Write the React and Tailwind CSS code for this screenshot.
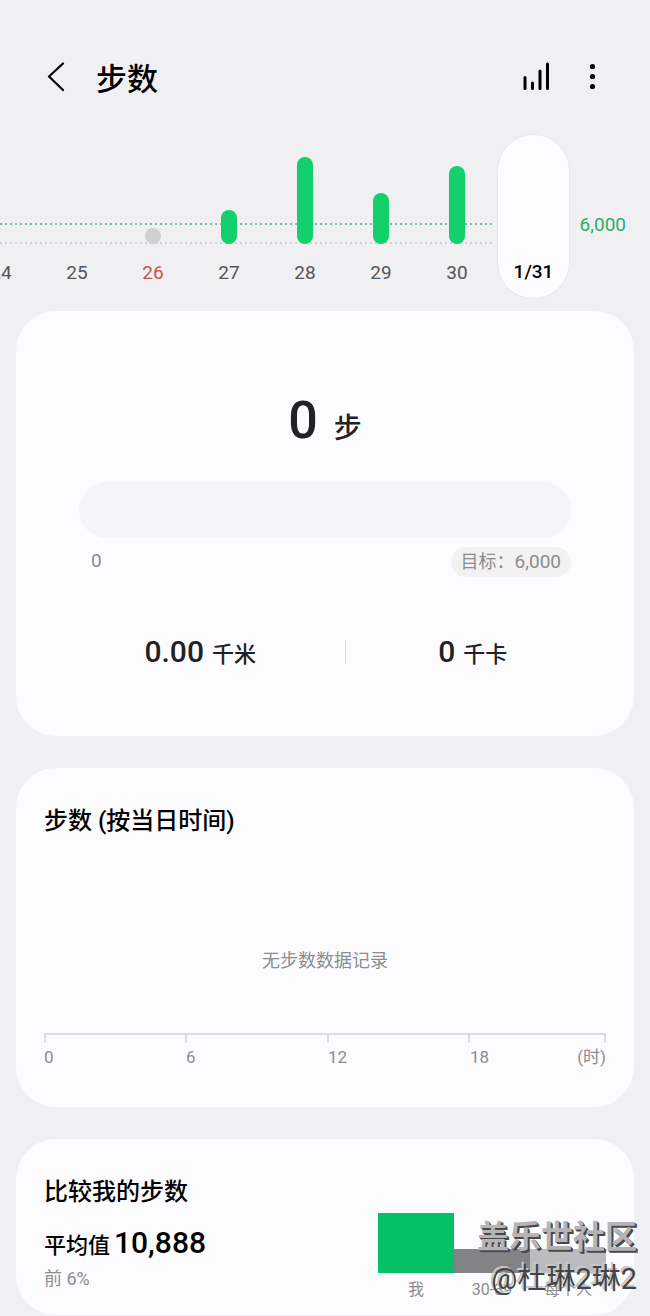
const days = [
    { label: '24', height: 0 },
    { label: '25', height: 0 },
    { label: '26', height: 0, rest: true },
    { label: '27', height: 34 },
    { label: '28', height: 87 },
    { label: '29', height: 51 },
    { label: '30', height: 78 },
    { label: '1/31', height: 0, selected: true },
];

const hours = ['0', '6', '12', '18'];

function Header() {
    return (
        <header className="flex items-center justify-between pt-14 pl-11 pr-[49px]">
            <div className="flex items-center gap-7">
                <button aria-label="返回">
                    <svg className="w-6 h-8" viewBox="0 0 24 32" fill="none" stroke="black" strokeWidth="2.2" strokeLinecap="round" strokeLinejoin="round">
                        <path d="M19 1.5L5 14.500l14 13.5" />
                    </svg>
                </button>
                <h1 className="pt-1 text-[31px] leading-10 font-medium">步数</h1>
            </div>
            <div className="flex items-center gap-8">
                <button aria-label="图表">
                    <svg className="w-8 h-8" viewBox="0 0 32 32" stroke="black" strokeWidth="3" strokeLinecap="round">
                        <path d="M4 15.500v11M11.500 21v5.500M19 9v17.500M26.500 2v24.500" />
                    </svg>
                </button>
                <button aria-label="更多">
                    <svg className="w-4 h-8" viewBox="0 0 16 32" fill="black">
                        <circle cx="7.500" cy="4.500" r="2.600" />
                        <circle cx="7.500" cy="14.500" r="2.600" />
                        <circle cx="7.500" cy="24.500" r="2.600" />
                    </svg>
                </button>
            </div>
        </header>
    );
}

function DayPicker() {
    return (
        <section className="relative mt-[34px] flex justify-end overflow-hidden pr-[80px]">
            {/* Goal line and base line */}
            <svg className="absolute left-0 top-0 w-[calc(100%-155px)] h-full" fill="none" strokeWidth="2">
                <line x1="0" y1="90" x2="100%" y2="90" stroke="#6fbf9a" strokeDasharray="2 3" />
                <line x1="0" y1="109" x2="100%" y2="109" stroke="#d0d0d2" strokeDasharray="2 3" />
            </svg>
            {days.map((day) => (
                <button
                    key={day.label}
                    className={`relative shrink-0 h-[165px] pb-[14px] flex flex-col items-center justify-end gap-[17px] ${day.selected ? 'w-[73px] ml-[2px] rounded-full border border-[#e8e8ea] bg-[#fcfcfe]' : 'w-[76px]'}`}
                >
                    {day.rest && <span className="w-4 h-4 rounded-full bg-[#d0d0d0]" />}
                    {day.height > 0 && <span className="w-4 rounded-full bg-[#13cf6d]" style={{ height: day.height }} />}
                    <span className={`text-[19px] leading-6 ${day.selected ? 'font-medium text-black' : day.rest ? 'text-[#c9504a]' : 'text-[#555557]'}`}>
                        {day.label}
                    </span>
                </button>
            ))}
            <span className="absolute right-6 top-[79px] text-[19px] leading-6 text-[#2bae6c]">6,000</span>
        </section>
    );
}

function Summary() {
    return (
        <section className="mt-3 rounded-[40px] bg-[#fcfcfe] px-[63px] pt-[82px] pb-16 text-[#222224]">
            <p className="flex items-baseline justify-center gap-4 font-medium">
                <span className="text-[52px] leading-14">0</span>
                <span className="text-[28px]">步</span>
            </p>
            <div className="mt-8 h-14 rounded-full bg-[#f5f5f7]" />
            <div className="mt-[9px] flex items-start justify-between pl-3 text-[#8c8c8e]">
                <span className="text-[19px] leading-7">0</span>
                <button className="flex items-center rounded-full bg-[#f2f2f3] px-[10px]">
                    <span className="text-lg leading-[30px]">目标：</span>
                    <span className="text-[19px] leading-[30px]">6,000</span>
                </button>
            </div>
            <div className="mt-[55px] flex items-center font-medium">
                <p className="flex flex-[243] items-baseline justify-center gap-2 pr-6">
                    <span className="text-[30px] leading-10">0.00</span>
                    <span className="text-[22px] leading-8">千米</span>
                </p>
                <span className="h-6 w-px bg-[#dcdcde]" />
                <p className="flex flex-[197] items-baseline justify-center gap-2 pl-7">
                    <span className="text-[30px] leading-10">0</span>
                    <span className="text-[22px] leading-8">千卡</span>
                </p>
            </div>
        </section>
    );
}

function HourlySteps() {
    return (
        <section className="mt-8 rounded-[40px] bg-[#fcfcfe] px-7 pt-[37px] pb-[38px]">
            <h2 className="text-2xl leading-8 font-medium">步数 (按当日时间)</h2>
            <p className="mt-[112px] text-center text-lg leading-6 text-[#8c8c8e]">无步数数据记录</p>
            <div className="mt-[60px] flex border-t-2 border-r-2 border-[#dcdcde]">
                <span className="h-2 flex-[142] border-l-2 border-[#dcdcde]" />
                <span className="h-2 flex-[142] border-l-2 border-[#dcdcde]" />
                <span className="h-2 flex-[142] border-l-2 border-[#dcdcde]" />
                <span className="h-2 flex-[136] border-l-2 border-[#dcdcde]" />
            </div>
            <div className="mt-[2px] flex text-[17px] leading-6 text-[#8c8c8e]">
                {hours.slice(0, 3).map((hour) => (
                    <span key={hour} className="flex-[142]">{hour}</span>
                ))}
                <span className="flex flex-[136] justify-between">
                    <span>{hours[3]}</span>
                    <span>(时)</span>
                </span>
            </div>
        </section>
    );
}

function Compare() {
    return (
        <section className="relative mt-8 flex justify-between rounded-[40px] bg-[#fcfcfe] px-7 pt-[37px] pb-2">
            <div>
                <h2 className="text-2xl leading-8 font-medium">比较我的步数</h2>
                <p className="mt-[15px] flex items-baseline gap-1 font-medium">
                    <span className="text-[22px]">平均值</span>
                    <span className="text-[30px] leading-10">10,888</span>
                </p>
                <p className="text-lg leading-8 text-[#8c8c8e]">前 6%</p>
            </div>
            <div className="flex items-end pt-[37px] text-base leading-[34px] text-[#8c8c8e]">
                <div className="w-[76px] text-center">
                    <div className="h-[60px] bg-[#04c066]" />
                    我
                </div>
                <div className="w-[76px] text-center">
                    <div className="h-6 bg-[#838386]" />
                    30-39
                </div>
                <div className="w-[76px] text-center">
                    <div className="h-6 bg-[#bcbcbe]" />
                    每个人
                </div>
            </div>
            {/* Community stamp */}
            <div className="absolute -right-[3px] bottom-[15px] text-right">
                <p className="text-[32px] leading-[42px] font-bold text-[#b4b4b6] [text-shadow:1px_1px_0_#48484a,2px_2px_0_#48484a]">盖乐世社区</p>
                <p className="text-[29px] leading-[42px] text-[#444446] [text-shadow:-2px_-2px_0_#c8c8ca]">@杜琳2琳2</p>
            </div>
        </section>
    );
}

export default function App() {
    return (
        <div className="min-h-screen overflow-hidden bg-[#f0f0f2] font-[Roboto,'Noto_Sans_CJK_SC',sans-serif] text-black">
            <Header />
            <DayPicker />
            <main className="px-4">
                <Summary />
                <HourlySteps />
                <Compare />
            </main>
        </div>
    );
}
